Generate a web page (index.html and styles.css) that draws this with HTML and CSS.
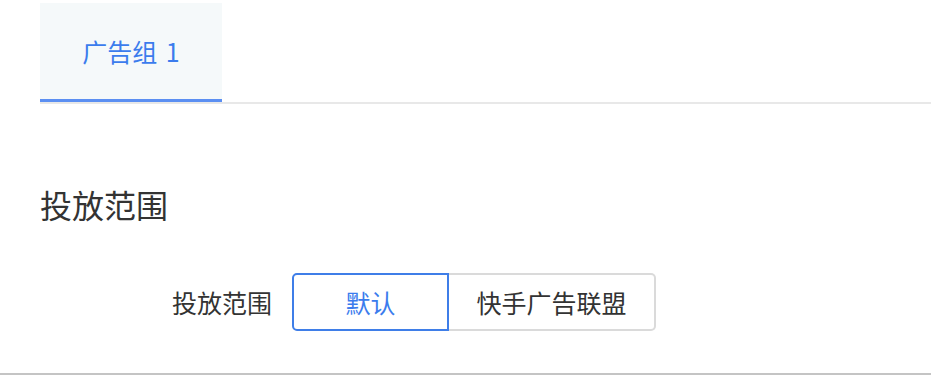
FILE: index.html
```html
<!DOCTYPE html>
<html lang="zh">
<head>
<meta charset="utf-8">
<link rel="stylesheet" href="styles.css">
</head>
<body>
<div class="page">
  <div class="tabs">
    <div class="tab active">广告组&nbsp;1</div>
  </div>
  <h2 class="section-title">投放范围</h2>
  <div class="form-row">
    <div class="label">投放范围</div>
    <div class="radio-group">
      <div class="radio-btn checked">默认</div>
      <div class="radio-btn">快手广告联盟</div>
    </div>
  </div>
</div>
<div class="bottom-line"></div>
</body>
</html>
```
FILE: styles.css
```css
html, body {
  margin: 0;
  padding: 0;
  background: #fff;
  font-family: "Noto Sans CJK SC", "Noto Sans", sans-serif;
  color: #333;
}
.page {
  padding-left: 40px;
  height: 373px;
  box-sizing: border-box;
  overflow: hidden;
}
.tabs {
  margin-top: 3px;
  display: flex;
  border-bottom: 2px solid #e8e8e8;
}
.tab {
  width: 182px;
  height: 96px;
  display: flex;
  align-items: center;
  justify-content: center;
  font-size: 25px;
  color: #3b7ced;
  background: #f5f9fa;
  border-bottom: 3px solid #5b8ff2;
  word-spacing: 3px;
}
.section-title {
  margin: 80px 0 0 0;
  font-size: 32px;
  font-weight: normal;
  line-height: 40px;
  color: #333;
}
.form-row {
  display: flex;
  align-items: center;
  gap: 20px;
  margin-top: 49px;
  padding-left: 132px;
}
.label {
  font-size: 25px;
  color: #333;
}
.radio-group {
  display: flex;
}
.radio-btn {
  height: 58px;
  box-sizing: border-box;
  display: flex;
  align-items: center;
  justify-content: center;
  font-size: 25px;
  color: #333;
  border: 2px solid #dadada;
}
.radio-btn:first-child {
  width: 157px;
  border-radius: 5px 0 0 5px;
}
.radio-btn:last-child {
  width: 207px;
  border-left: none;
  border-radius: 0 5px 5px 0;
}
.radio-btn.checked {
  color: #3b7ced;
  border-color: #3f7ee8;
}
.bottom-line {
  height: 2px;
  background: #c4c4c4;
}
```
